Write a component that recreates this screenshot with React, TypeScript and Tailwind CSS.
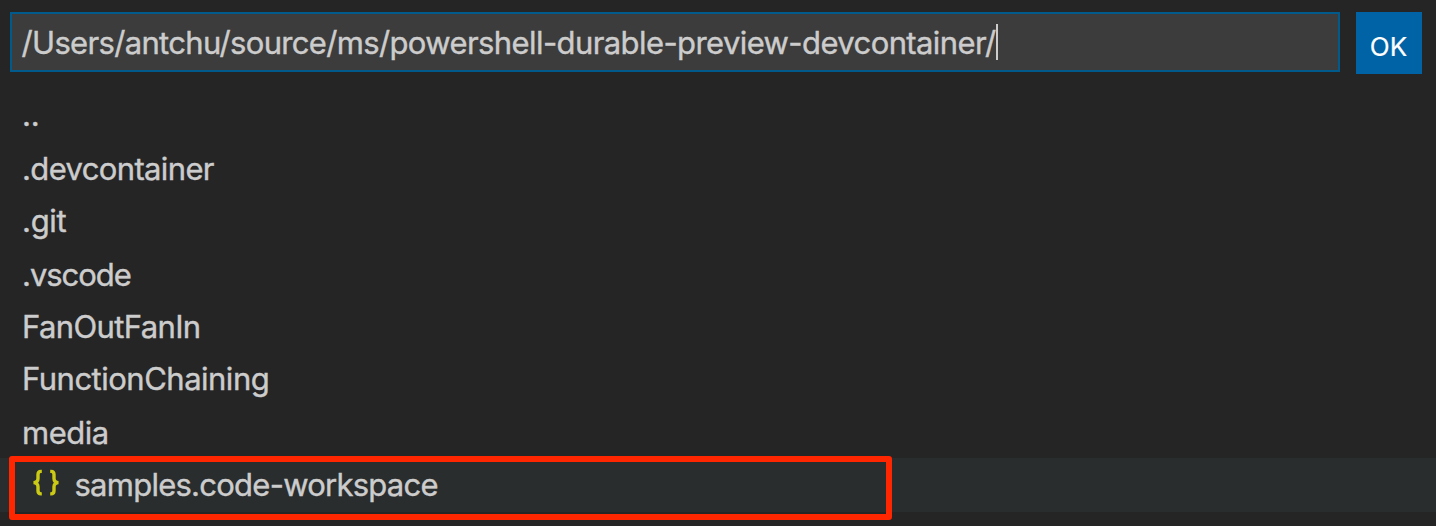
type Entry = { name: string; row: string; text: string };

const entries: Entry[] = [
  { name: "..", row: "h-[54px]", text: "tracking-[-0.2px]" },
  { name: ".devcontainer", row: "h-[52px]", text: "tracking-[-0.63px]" },
  { name: ".git", row: "h-[54px]", text: "tracking-[-0.3px]" },
  { name: ".vscode", row: "h-[52px]", text: "tracking-[-1.05px]" },
  { name: "FanOutFanIn", row: "h-[52px]", text: "tracking-[-0.62px]" },
  { name: "FunctionChaining", row: "h-[54px]", text: "tracking-[-0.5px]" },
  { name: "media", row: "h-[52px]", text: "tracking-[-0.5px]" },
];

function BracesIcon() {
  return (
    <svg
      className="h-[28px] w-[26px]"
      viewBox="0 0 26 28"
      fill="none"
      stroke="#cbcb16"
      strokeWidth="3.4"
    >
      <path d="M8.8 2.4 H8 Q5 2.4 5 5.4 V9.4 Q5 13.2 0.6 13.6 Q5 14 5 17.8 V21.8 Q5 24.9 8 24.9 H8.8" />
      <path d="M17.2 2.4 H18 Q21 2.4 21 5.4 V9.4 Q21 13.2 25.4 13.6 Q21 14 21 17.8 V21.8 Q21 24.9 18 24.9 H17.2" />
    </svg>
  );
}

export default function App() {
  return (
    <main className="relative flex h-[526px] w-[1436px] flex-col overflow-hidden bg-[#252526] font-['Inter','Liberation_Sans',sans-serif] text-[31px] leading-[54px] text-[#cccccc] [-webkit-text-stroke:0.4px_currentColor]">
      <header className="flex h-[88px] items-start gap-4 pt-3 pl-[10px]">
        <div className="flex h-[60px] w-[1330px] items-center border-2 border-[#005a8c] bg-[#3c3c3c] pl-[9.5px]">
          <span className="pt-[2px] whitespace-nowrap tracking-[-0.59px]">
            <span className="tracking-[-0.67px]">/Users/antchu/source/ms/</span>
            powershell-durable-preview-devcontainer/
          </span>
          <span className="h-9 w-[2px] bg-[#cccccc]" />
        </div>
        <button className="flex h-[62px] w-[66px] items-center justify-center bg-[#0063a5] pt-[8px] pr-px text-[26px] text-white [-webkit-text-stroke:0.2px_currentColor]">
          OK
        </button>
      </header>
      <ul>
        {entries.map((entry) => (
          <li key={entry.name} className={`${entry.row} pl-[22px]`}>
            <span className={`whitespace-nowrap ${entry.text}`}>{entry.name}</span>
          </li>
        ))}
        <li className="flex h-[54px] bg-[#2a2d2e] pl-[33px]">
          <span className="mt-[11px]">
            <BracesIcon />
          </span>
          <span className="ml-[15.5px] tracking-[-0.75px]">samples.code-workspace</span>
        </li>
      </ul>
      <div className="absolute top-[455.5px] left-[9px] h-[64px] w-[883px] rounded-[3px] border-[6px] border-[#ff2600]" />
    </main>
  );
}
